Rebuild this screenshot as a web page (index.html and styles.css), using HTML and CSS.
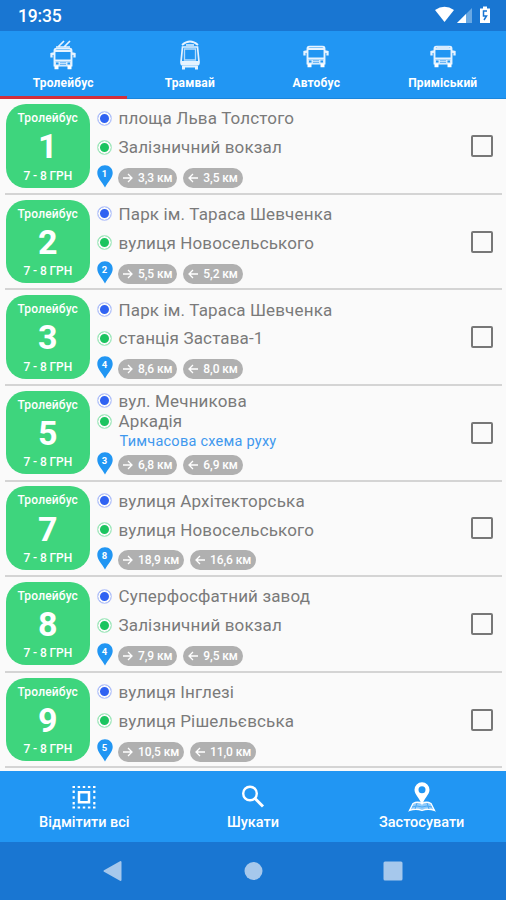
FILE: index.html
```html
<!DOCTYPE html>
<html lang="uk">
<head>
<meta charset="utf-8">
<title>Маршрути</title>
<link rel="stylesheet" href="styles.css">
</head>
<body>
<svg class="defs" width="0" height="0">
  <symbol id="pin" viewBox="0 0 16 23"><path d="M8 0.3C3.6 0.3.3 3.6.3 7.9.3 13 5 16.500 8 22.500 11 16.500 15.700 13 15.700 7.900 15.700 3.600 12.400.300 8 .300Z" fill="#2196f3"/></symbol>
  <symbol id="right" viewBox="0 0 10 10"><path d="M0 5H9M5 1L9 5L5 9" fill="none" stroke="#fff" stroke-width="1.3"/></symbol>
  <symbol id="left" viewBox="0 0 10 10"><path d="M10 5H1M5 1L1 5L5 9" fill="none" stroke="#fff" stroke-width="1.3"/></symbol>
  <symbol id="bus" viewBox="0 0 26 22"><path d="M4.500 18V3Q4.500 1 7 1H19Q21.500 1 21.500 3V18Z" fill="none" stroke="#e6f3ff" stroke-width="1.900"/><path d="M5 3.500H21M5 13H21" stroke="#e6f3ff" stroke-width="1.800"/><path d="M4 6L1.500 6.500V10M22 6L24.500 6.500V10" fill="none" stroke="#e6f3ff" stroke-width="2.300"/><path d="M5 14H21V18.500H5Z" fill="#d4eafd"/><path d="M6 15H8.500V17H6ZM17.500 15H20V17H17.500Z" fill="#2196f3"/><path d="M10 15.200H16M10 17H16" stroke="#6bb6f5"/><path d="M4.500 18H8.500V22H4.500ZM17.500 18H21.500V22H17.500Z" fill="#fff"/></symbol>
</svg>
<div class="status">
  <span>19:35</span>
  <svg width="60" height="20" viewBox="0 0 60 20"><path d="M1 5Q10.500-1.500 20 5L10.500 17Z" fill="#fff"/><path d="M23 18L38 3V18Z" fill="#69a8e3"/><path d="M23 18L32 9V18Z" fill="#fff"/><path d="M46 3.500H49V1.500H53V3.500H56V18H46Z" fill="#fff"/><path d="M53 6H49.500V11H52.500L50 15" fill="none" stroke="#1976d2" stroke-width="1.500"/></svg>
</div>
<nav class="tabs">
  <div class="tab active"><svg width="26" height="30" viewBox="0 0 26 30"><use href="#bus" y="7.500" width="26" height="22"/><path d="M8 7L14 1M14 7L20 1M6 7H20" stroke="#e6f3ff" stroke-width="1.700"/></svg><span>Тролейбус</span></div>
  <div class="tab"><svg width="26" height="30" viewBox="0 0 26 30"><path d="M5 5Q13-2 21 5" fill="none" stroke="#e6f3ff" stroke-width="1.800"/><path d="M9 4H17V6H9Z" fill="#b5dbfb"/><path d="M5.500 7H20.500L22 22Q22 25 20 25H6Q4 25 4 22Z" fill="none" stroke="#e6f3ff" stroke-width="1.700"/><path d="M7.500 9H18.500V20H7.500Z" fill="none" stroke="#b5dbfb" stroke-width="1.300"/><path d="M4 21H22V25H4ZM5 26H8V29.500H5ZM18 26H21V29.500H18ZM8 26H18V27.500H8Z" fill="#e6f3ff"/></svg><span>Трамвай</span></div>
  <div class="tab"><svg width="26" height="30" viewBox="0 0 26 30"><use href="#bus" y="5.500" width="26" height="22"/></svg><span>Автобус</span></div>
  <div class="tab"><svg width="26" height="30" viewBox="0 0 26 30"><use href="#bus" y="5.500" width="26" height="22"/><path d="M5 10L8 6H18L21 10Z" fill="#d4eafd"/></svg><span>Приміський</span></div>
</nav>
<main class="list">
  <section class="row">
    <div class="badge"><span>Тролейбус</span><b>1</b><span>7 - 8 ГРН</span></div>
    <div class="info"><div class="stops"><p><i class="dot"></i>площа Льва Толстого</p><p><i class="dot green"></i>Залізничний вокзал</p></div>
      <div class="meta"><div class="pin"><svg><use href="#pin"/></svg><em>1</em></div><div class="pill"><svg><use href="#right"/></svg>3,3 км</div><div class="pill"><svg><use href="#left"/></svg>3,5 км</div></div></div>
    <div class="check"></div>
  </section>
  <section class="row">
    <div class="badge"><span>Тролейбус</span><b>2</b><span>7 - 8 ГРН</span></div>
    <div class="info"><div class="stops"><p><i class="dot"></i>Парк ім. Тараса Шевченка</p><p><i class="dot green"></i>вулиця Новосельського</p></div>
      <div class="meta"><div class="pin"><svg><use href="#pin"/></svg><em>2</em></div><div class="pill"><svg><use href="#right"/></svg>5,5 км</div><div class="pill"><svg><use href="#left"/></svg>5,2 км</div></div></div>
    <div class="check"></div>
  </section>
  <section class="row">
    <div class="badge"><span>Тролейбус</span><b>3</b><span>7 - 8 ГРН</span></div>
    <div class="info"><div class="stops"><p><i class="dot"></i>Парк ім. Тараса Шевченка</p><p><i class="dot green"></i>станція Застава-1</p></div>
      <div class="meta"><div class="pin"><svg><use href="#pin"/></svg><em>4</em></div><div class="pill"><svg><use href="#right"/></svg>8,6 км</div><div class="pill"><svg><use href="#left"/></svg>8,0 км</div></div></div>
    <div class="check"></div>
  </section>
  <section class="row">
    <div class="badge"><span>Тролейбус</span><b>5</b><span>7 - 8 ГРН</span></div>
    <div class="info"><div class="stops"><p><i class="dot"></i>вул. Мечникова</p><p><i class="dot green"></i>Аркадія</p><p class="note">Тимчасова схема руху</p></div>
      <div class="meta"><div class="pin"><svg><use href="#pin"/></svg><em>3</em></div><div class="pill"><svg><use href="#right"/></svg>6,8 км</div><div class="pill"><svg><use href="#left"/></svg>6,9 км</div></div></div>
    <div class="check"></div>
  </section>
  <section class="row">
    <div class="badge"><span>Тролейбус</span><b>7</b><span>7 - 8 ГРН</span></div>
    <div class="info"><div class="stops"><p><i class="dot"></i>вулиця Архітекторська</p><p><i class="dot green"></i>вулиця Новосельського</p></div>
      <div class="meta"><div class="pin"><svg><use href="#pin"/></svg><em>8</em></div><div class="pill"><svg><use href="#right"/></svg>18,9 км</div><div class="pill"><svg><use href="#left"/></svg>16,6 км</div></div></div>
    <div class="check"></div>
  </section>
  <section class="row">
    <div class="badge"><span>Тролейбус</span><b>8</b><span>7 - 8 ГРН</span></div>
    <div class="info"><div class="stops"><p><i class="dot"></i>Суперфосфатний завод</p><p><i class="dot green"></i>Залізничний вокзал</p></div>
      <div class="meta"><div class="pin"><svg><use href="#pin"/></svg><em>4</em></div><div class="pill"><svg><use href="#right"/></svg>7,9 км</div><div class="pill"><svg><use href="#left"/></svg>9,5 км</div></div></div>
    <div class="check"></div>
  </section>
  <section class="row">
    <div class="badge"><span>Тролейбус</span><b>9</b><span>7 - 8 ГРН</span></div>
    <div class="info"><div class="stops"><p><i class="dot"></i>вулиця Інглезі</p><p><i class="dot green"></i>вулиця Рішельєвська</p></div>
      <div class="meta"><div class="pin"><svg><use href="#pin"/></svg><em>5</em></div><div class="pill"><svg><use href="#right"/></svg>10,5 км</div><div class="pill"><svg><use href="#left"/></svg>11,0 км</div></div></div>
    <div class="check"></div>
  </section>
</main>
<div class="actions">
  <div class="action"><svg width="30" height="32" viewBox="0 0 30 32"><path d="M3.500 6H26.500M3.500 26.500H26.500" stroke="#fff" stroke-width="2.200" stroke-dasharray="2.500 2.625"/><path d="M4.700 9.500V23.500M25.300 9.500V23.500" stroke="#fff" stroke-width="2.200" stroke-dasharray="2.500 3.200"/><path d="M10 11.200H20V21.300H10Z" fill="none" stroke="#fff" stroke-width="2.500"/></svg><span>Відмітити всі</span></div>
  <div class="action"><svg width="30" height="32" viewBox="0 0 30 32"><circle cx="12" cy="12.500" r="6.800" fill="none" stroke="#fff" stroke-width="2.400"/><path d="M17 17.500L25 25.500" stroke="#fff" stroke-width="3"/></svg><span>Шукати</span></div>
  <div class="action"><svg width="30" height="32" viewBox="0 0 30 32"><path d="M6 22.500Q10.500 20 15 22.500Q19.500 20 24 22.500L27.500 29.500Q21 27 15 29.500Q9 27 2.500 29.500Z" fill="#8fcafa" stroke="#fff" stroke-width="1.300"/><path d="M10 22L8 28M20 22L22 28M5 26Q10 24 15 26Q20 24 25 26" fill="none" stroke="#4aa9f6" stroke-width="1"/><path d="M15 1.200A7.500 7.500 0 0 0 7.500 8.700C7.500 14 12.500 16 15 24.500C17.500 16 22.500 14 22.500 8.700A7.500 7.500 0 0 0 15 1.200ZM15 5.200A3.500 3.500 0 1 1 15 12.200A3.500 3.500 0 0 1 15 5.200Z" fill="#fff" fill-rule="evenodd"/></svg><span>Застосувати</span></div>
</div>
<div class="sysnav">
  <svg width="20" height="22" viewBox="0 0 20 22"><path d="M2.500 11L18.500 2V20Z" fill="#a6c8ec" stroke="#a6c8ec" stroke-width="2" stroke-linejoin="round"/></svg>
  <svg width="20" height="20" viewBox="0 0 20 20"><circle cx="10.500" cy="10" r="9" fill="#a6c8ec"/></svg>
  <svg width="20" height="20" viewBox="0 0 20 20"><rect x=".5" y=".5" width="19" height="19" rx="1.500" fill="#a6c8ec"/></svg>
</div>
</body>
</html>
```
FILE: styles.css
```css
* { box-sizing: border-box; }
body { margin: 0; width: 506px; height: 900px; overflow: hidden; display: flex; flex-direction: column; background: #fafafa; font-family: Roboto, "Liberation Sans", sans-serif; }
.defs { position: absolute; }
.status { flex: none; height: 30.5px; background: #1976d2; color: #fff; display: flex; justify-content: space-between; align-items: center; padding: 2px 12.500px 0 18px; font-size: 17.500px; font-weight: 500; letter-spacing: -.2px; }
.status svg { margin-bottom: 2px; }
.tabs { flex: none; height: 68.500px; display: flex; background: #2196f3; color: #fff; border-bottom: 1px solid #1b86dc; }
.tab { flex: 1; display: flex; flex-direction: column; align-items: center; padding-top: 9.500px; font-size: 12px; font-weight: 700; line-height: 16px; letter-spacing: .15px; }
.tab svg { margin-bottom: 4.500px; }
.tab.active { border-bottom: 3px solid #d32f3c; margin-bottom: -1px; }
.list { flex: none; height: 671.500px; overflow: hidden; }
.row { height: 95.600px; display: flex; padding: 5px 0 0 6px; position: relative; }
.row::after { content: ""; position: absolute; left: 5px; right: 4px; bottom: -.3px; height: 2px; background: #d4d4d4; }
.badge { width: 83.500px; height: 83.500px; border-radius: 20px; background: #3ed57d; color: #fff; display: flex; flex-direction: column; align-items: center; justify-content: space-between; padding: 7px 0 4px; font-size: 12px; line-height: 15px; letter-spacing: .15px; font-weight: 500; }
.badge span:last-child { letter-spacing: -.1px; }
.badge b { font-size: 34px; line-height: 34px; letter-spacing: 0; font-weight: 700; margin-top: -2px; }
.info { flex: 1; padding-left: 7.500px; }
.stops { height: 60.500px; display: flex; flex-direction: column; }
.stops p { margin: 0; height: 28.800px; display: flex; align-items: center; font-size: 17px; color: #7a7a7a; letter-spacing: .15px; white-space: nowrap; }
.stops:has(.note) p { height: 20.300px; }
.stops .note { color: #3f98ee; font-size: 14.500px; padding-left: 22.500px; letter-spacing: .25px; }
.dot { width: 15px; height: 15px; border-radius: 50%; border: 1px solid #d3dafc; background: #2f62f2; box-shadow: inset 0 0 0 2px #fafafa; margin: 0 6.500px 0 0; }
.dot.green { background: #1bc45f; border-color: #bff0d2; }
.meta { display: flex; align-items: center; height: 26px; margin-top: .5px; }
.pin { position: relative; width: 16px; height: 23px; margin: -3px 5px 0 -.5px; }
.pin svg { display: block; width: 16px; height: 23px; }
.pin em { position: absolute; left: 0; top: 2px; width: 16px; text-align: center; font: 700 9.500px/13px Roboto, sans-serif; color: #fff; }
.pill { height: 20px; border-radius: 10px; background: #b0b0b0; color: #fff; font-size: 12px; font-weight: 500; display: flex; align-items: center; padding: 0 5px; margin-right: 5.500px; letter-spacing: -.1px; white-space: nowrap; }
.pill svg { width: 10px; height: 10px; margin-right: 5.500px; }
.check { width: 22px; height: 22px; border: 2px solid #777; border-radius: 2px; margin: 31px 13.500px 0 0; }
.actions { flex: none; height: 71.500px; background: #2196f3; color: #fff; display: flex; position: relative; }
.action { flex: 1; display: flex; flex-direction: column; align-items: center; padding-top: 10px; font-size: 14.500px; line-height: 18px; font-weight: 500; }
.action svg { margin-bottom: 1px; }
.sysnav { flex: 1; background: #1976d2; display: flex; align-items: center; justify-content: space-between; padding: 0 103px 0 102px; }
```
